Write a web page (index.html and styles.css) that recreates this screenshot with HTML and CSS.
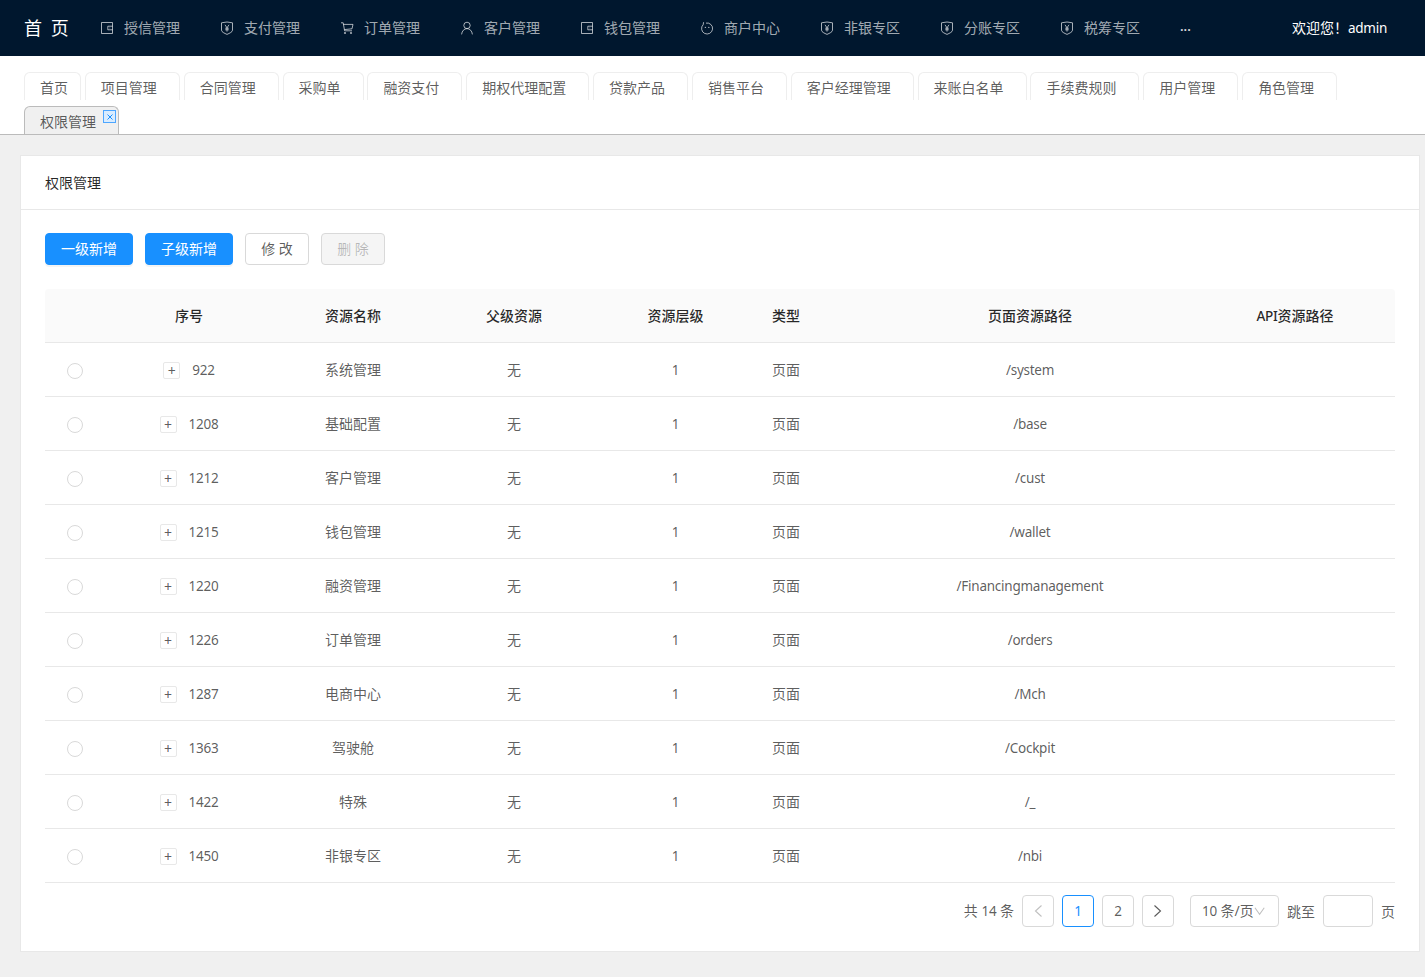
FILE: index.html
```html
<!DOCTYPE html>
<html lang="zh-CN">
<head>
    <meta charset="UTF-8">
    <title>权限管理</title>
    <link rel="stylesheet" href="styles.css">
</head>
<body>
    <svg class="icon-defs" width="0" height="0">
        <symbol id="i-wallet" viewBox="0 0 14 14">
            <path d="M1.5 1.5h11v11h-11zM12.5 5.200H7.800v3.600h4.700M9.600 7h.6" fill="none" stroke="currentColor"/>
        </symbol>
        <symbol id="i-safety" viewBox="0 0 14 14">
            <path d="M1.500 1.800 7 1l5.500.8v7.400c0 1.800-2.900 3-5.500 4.200-2.600-1.200-5.500-2.400-5.500-4.200zM5 3.800 7 6.800l2-3M7 6.800v3.800M5.200 7.200h3.600M5.200 8.800h3.600" fill="none" stroke="currentColor"/>
        </symbol>
        <symbol id="i-cart" viewBox="0 0 14 14">
            <path d="M1 1.800h2.200l1.400 8h7.400M3.400 3.400h9.600l-1 4.400-7.600.8" fill="none" stroke="currentColor"/>
            <circle cx="5" cy="12" r="1.100" fill="currentColor"/>
            <circle cx="11" cy="12" r="1.100" fill="currentColor"/>
        </symbol>
        <symbol id="i-user" viewBox="0 0 14 14">
            <circle cx="7" cy="4.400" r="3.200" fill="none" stroke="currentColor"/>
            <path d="M1.600 13.400c.3-3.400 2.600-5.800 5.400-5.800s5.100 2.400 5.400 5.800" fill="none" stroke="currentColor"/>
        </symbol>
        <symbol id="i-smile" viewBox="0 0 14 14">
            <path d="M3.600 1.200 3.200 3.600A5.500 5.500 0 1 0 6 2.100" fill="none" stroke="currentColor"/>
            <circle cx="5.400" cy="6.400" r=".7" fill="currentColor"/>
            <circle cx="8.800" cy="6.400" r=".7" fill="currentColor"/>
        </symbol>
    </svg>

    <header class="topbar">
        <div class="logo">首 页</div>
        <nav class="menu">
            <a class="menu-item"><svg class="menu-icon"><use href="#i-wallet"/></svg>授信管理</a>
            <a class="menu-item"><svg class="menu-icon"><use href="#i-safety"/></svg>支付管理</a>
            <a class="menu-item"><svg class="menu-icon"><use href="#i-cart"/></svg>订单管理</a>
            <a class="menu-item"><svg class="menu-icon"><use href="#i-user"/></svg>客户管理</a>
            <a class="menu-item"><svg class="menu-icon"><use href="#i-wallet"/></svg>钱包管理</a>
            <a class="menu-item"><svg class="menu-icon"><use href="#i-smile"/></svg>商户中心</a>
            <a class="menu-item"><svg class="menu-icon"><use href="#i-safety"/></svg>非银专区</a>
            <a class="menu-item"><svg class="menu-icon"><use href="#i-safety"/></svg>分账专区</a>
            <a class="menu-item"><svg class="menu-icon"><use href="#i-safety"/></svg>税筹专区</a>
            <a class="menu-item menu-more">...</a>
        </nav>
        <div class="welcome">欢迎您！<span class="latin">admin</span></div>
    </header>

    <div class="tabs">
        <a class="tab tab-home">首页</a>
        <a class="tab">项目管理</a>
        <a class="tab">合同管理</a>
        <a class="tab">采购单</a>
        <a class="tab">融资支付</a>
        <a class="tab">期权代理配置</a>
        <a class="tab">贷款产品</a>
        <a class="tab">销售平台</a>
        <a class="tab">客户经理管理</a>
        <a class="tab">来账白名单</a>
        <a class="tab">手续费规则</a>
        <a class="tab">用户管理</a>
        <a class="tab">角色管理</a>
        <a class="tab tab-active">权限管理
            <span class="tab-close">
                <svg width="6" height="6" viewBox="0 0 6 6"><path d="M.5.5l5 5M5.500.5l-5 5" stroke="#1890ff"/></svg>
            </span>
        </a>
    </div>

    <main class="content">
        <section class="card">
            <div class="card-title">权限管理</div>
            <div class="card-body">
                <div class="toolbar">
                    <button class="btn btn-primary">一级新增</button>
                    <button class="btn btn-primary">子级新增</button>
                    <button class="btn">修 改</button>
                    <button class="btn btn-disabled">删 除</button>
                </div>

                <table class="grid">
                    <colgroup>
                        <col class="col-radio">
                        <col class="col-id">
                        <col class="col-name">
                        <col class="col-parent">
                        <col class="col-level">
                        <col class="col-type">
                        <col class="col-path">
                        <col class="col-api">
                        <col class="col-rest">
                    </colgroup>
                    <thead>
                        <tr>
                            <th></th>
                            <th>序号</th>
                            <th>资源名称</th>
                            <th>父级资源</th>
                            <th>资源层级</th>
                            <th>类型</th>
                            <th>页面资源路径</th>
                            <th><span class="latin">API</span>资源路径</th>
                            <th></th>
                        </tr>
                    </thead>
                    <tbody>
                        <tr><td><span class="radio"></span></td><td><span class="expand">+</span><span class="latin">922</span></td><td>系统管理</td><td>无</td><td><span class="latin">1</span></td><td>页面</td><td><span class="latin">/system</span></td><td></td><td></td></tr>
                        <tr><td><span class="radio"></span></td><td><span class="expand">+</span><span class="latin">1208</span></td><td>基础配置</td><td>无</td><td><span class="latin">1</span></td><td>页面</td><td><span class="latin">/base</span></td><td></td><td></td></tr>
                        <tr><td><span class="radio"></span></td><td><span class="expand">+</span><span class="latin">1212</span></td><td>客户管理</td><td>无</td><td><span class="latin">1</span></td><td>页面</td><td><span class="latin">/cust</span></td><td></td><td></td></tr>
                        <tr><td><span class="radio"></span></td><td><span class="expand">+</span><span class="latin">1215</span></td><td>钱包管理</td><td>无</td><td><span class="latin">1</span></td><td>页面</td><td><span class="latin">/wallet</span></td><td></td><td></td></tr>
                        <tr><td><span class="radio"></span></td><td><span class="expand">+</span><span class="latin">1220</span></td><td>融资管理</td><td>无</td><td><span class="latin">1</span></td><td>页面</td><td><span class="latin">/Financingmanagement</span></td><td></td><td></td></tr>
                        <tr><td><span class="radio"></span></td><td><span class="expand">+</span><span class="latin">1226</span></td><td>订单管理</td><td>无</td><td><span class="latin">1</span></td><td>页面</td><td><span class="latin">/orders</span></td><td></td><td></td></tr>
                        <tr><td><span class="radio"></span></td><td><span class="expand">+</span><span class="latin">1287</span></td><td>电商中心</td><td>无</td><td><span class="latin">1</span></td><td>页面</td><td><span class="latin">/Mch</span></td><td></td><td></td></tr>
                        <tr><td><span class="radio"></span></td><td><span class="expand">+</span><span class="latin">1363</span></td><td>驾驶舱</td><td>无</td><td><span class="latin">1</span></td><td>页面</td><td><span class="latin">/Cockpit</span></td><td></td><td></td></tr>
                        <tr><td><span class="radio"></span></td><td><span class="expand">+</span><span class="latin">1422</span></td><td>特殊</td><td>无</td><td><span class="latin">1</span></td><td>页面</td><td><span class="latin">/_</span></td><td></td><td></td></tr>
                        <tr><td><span class="radio"></span></td><td><span class="expand">+</span><span class="latin">1450</span></td><td>非银专区</td><td>无</td><td><span class="latin">1</span></td><td>页面</td><td><span class="latin">/nbi</span></td><td></td><td></td></tr>
                    </tbody>
                </table>

                <div class="pager">
                    <span class="pager-total">共 <span class="latin">14</span> 条</span>
                    <a class="page page-off"><svg width="12" height="12" viewBox="0 0 12 12"><path d="M9.500.5 3.500 6l6 5.500" fill="none" stroke="currentColor" stroke-width="1.100"/></svg></a>
                    <a class="page page-current latin">1</a>
                    <a class="page latin">2</a>
                    <a class="page"><svg width="12" height="12" viewBox="0 0 12 12"><path d="M2.500.5l6 5.500-6 5.500" fill="none" stroke="currentColor" stroke-width="1.100"/></svg></a>
                    <div class="page-size"><span><span class="latin">10</span> 条/页</span><svg width="12" height="12" viewBox="0 0 12 12"><path d="M1 2.500 6 9.500l5-7" fill="none" stroke="#bfbfbf" stroke-width="1.100"/></svg></div>
                    <span class="pager-label">跳至</span>
                    <input class="page-input" type="text">
                    <span class="pager-label">页</span>
                </div>
            </div>
        </section>
    </main>
</body>
</html>
```

FILE: styles.css
```css
* {
    box-sizing: border-box;
}
body {
    font-family: "Noto Sans", "Noto Sans CJK SC", sans-serif;
    font-size: 14px;
    line-height: 1.5;
    margin: 0;
    background-color: #f0f0f0;
    color: rgba(0, 0, 0, 0.65);
}
.icon-defs {
    display: block;
    height: 0;
}
/* latin text and digits run a little narrower next to the CJK text */
.latin {
    font-size: 13.5px;
    letter-spacing: -0.25px;
}

/* top bar */
.topbar {
    display: flex;
    align-items: center;
    height: 56px;
    padding-left: 24px;
    background-color: #00172e;
}
.logo {
    width: 56px;
    font-size: 18px;
    letter-spacing: 2px;
    white-space: nowrap;
    color: white;
}
.menu {
    display: flex;
    flex: 1;
}
.menu-item {
    display: flex;
    align-items: center;
    padding: 0 20px 2px;
    color: rgba(255, 255, 255, 0.65);
    white-space: nowrap;
}
.menu-more {
    font-weight: 600;
    font-size: 13px;
    color: rgba(255, 255, 255, 0.85);
}
.menu-icon {
    width: 14px;
    height: 14px;
    margin: 2px 10px 0 0;
}
.welcome {
    padding-right: 38px;
    color: white;
    white-space: nowrap;
}

/* tab strip */
.tabs {
    display: flex;
    flex-wrap: wrap;
    gap: 6px 3.85px;
    padding: 16px 24px 0;
    background-color: white;
    border-bottom: 1px solid #bbb;
}
.tab {
    position: relative;
    height: 28px;
    padding: 0 22px 0 15px;
    line-height: 29px;
    background-color: white;
    border: 1px solid #eee;
    border-bottom: none;
    border-radius: 6px 6px 0 0;
    white-space: nowrap;
}
.tab-home {
    padding-right: 12px;
}
.tab-active {
    background-color: #f0f0f0;
    border-color: #bbb;
}
.tab-close {
    position: absolute;
    top: 3px;
    right: 2px;
    display: flex;
    align-items: center;
    justify-content: center;
    width: 13px;
    height: 13px;
    background-color: #d9ecff;
    border: 1px solid #4da6ff;
}

/* card */
.content {
    padding: 20px 5px 25px 20px;
}
.card {
    background-color: white;
    border: 1px solid #e8e8e8;
}
.card-title {
    height: 54px;
    padding-left: 24px;
    line-height: 54px;
    color: rgba(0, 0, 0, 0.85);
    border-bottom: 1px solid #e8e8e8;
}
.card-body {
    padding: 23px 24px 24px;
}
.toolbar {
    display: flex;
    gap: 12px;
    margin-bottom: 24px;
}
.btn {
    min-width: 64px;
    height: 32px;
    padding: 0 15px 2px;
    font-family: inherit;
    font-size: 14px;
    line-height: 1.5;
    color: rgba(0, 0, 0, 0.65);
    background-color: white;
    border: 1px solid #d9d9d9;
    border-radius: 4px;
    cursor: pointer;
}
.btn-primary {
    color: white;
    background-color: #1890ff;
    border-color: #1890ff;
    box-shadow: 0 2px 0 rgba(0, 0, 0, 0.045);
}
.btn-disabled {
    color: rgba(0, 0, 0, 0.25);
    background-color: #f5f5f5;
    cursor: not-allowed;
}

/* table */
.grid {
    width: 100%;
    table-layout: fixed;
    border-collapse: separate;
    border-spacing: 0;
}
.col-radio { width: 60px; }
.col-id { width: 168px; }
.col-name { width: 160px; }
.col-parent { width: 162px; }
.col-level { width: 161px; }
.col-type { width: 60px; }
.col-path { width: 428px; }
.col-api { width: 102px; }
.col-rest { width: 49px; }
.grid th,
.grid td {
    height: 54px;
    padding: 0;
    text-align: center;
    white-space: nowrap;
    border-bottom: 1px solid #e8e8e8;
}
.grid th {
    font-weight: 500;
    color: rgba(0, 0, 0, 0.85);
    background-color: #fafafa;
}
.grid th:first-child {
    border-top-left-radius: 4px;
}
.grid th:last-child {
    border-top-right-radius: 4px;
}
.radio {
    display: inline-block;
    width: 16px;
    height: 16px;
    vertical-align: middle;
    border: 1px solid #d9d9d9;
    border-radius: 50%;
}
.expand {
    display: inline-block;
    width: 17px;
    height: 17px;
    margin: 0 12px 1px 0;
    line-height: 15px;
    text-align: center;
    vertical-align: middle;
    color: rgba(0, 0, 0, 0.65);
    border: 1px solid #e8e8e8;
    border-radius: 2px;
}

/* pagination */
.pager {
    display: flex;
    justify-content: flex-end;
    align-items: center;
    gap: 8px;
    margin-top: 12px;
}
.page {
    display: flex;
    align-items: center;
    justify-content: center;
    width: 32px;
    height: 32px;
    border: 1px solid #d9d9d9;
    border-radius: 4px;
}
.page-off {
    color: rgba(0, 0, 0, 0.25);
}
.page-current {
    color: #1890ff;
    border-color: #1890ff;
}
.page-size {
    display: flex;
    align-items: center;
    justify-content: space-between;
    width: 89px;
    height: 32px;
    margin-left: 8px;
    padding: 0 13px 0 11px;
    white-space: nowrap;
    border: 1px solid #d9d9d9;
    border-radius: 4px;
}
.page-input {
    width: 50px;
    height: 32px;
    border: 1px solid #d9d9d9;
    border-radius: 4px;
}
```
